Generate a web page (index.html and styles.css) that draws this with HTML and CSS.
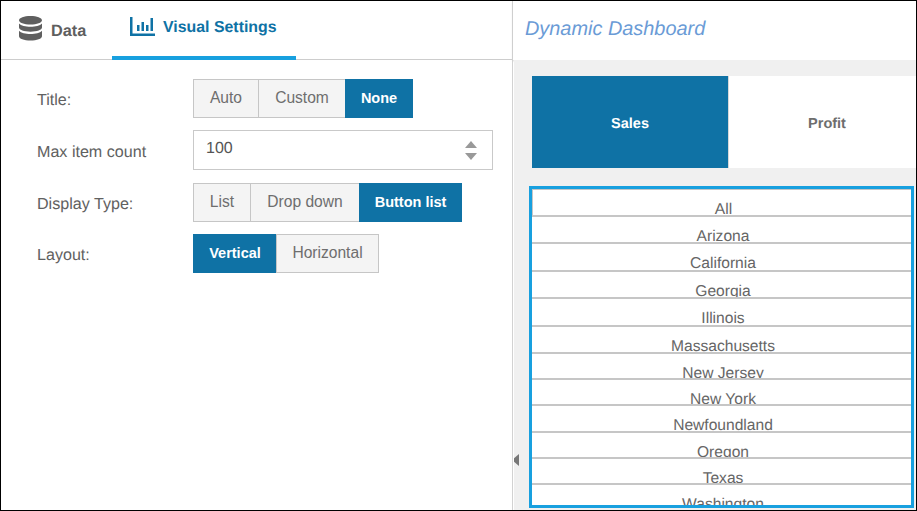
FILE: index.html
```html
<!DOCTYPE html>
<html lang="en">
<head>
<meta charset="utf-8">
<title>Dynamic Dashboard</title>
<link rel="stylesheet" href="styles.css">
</head>
<body>
<div class="frame">
  <section class="left">
    <nav class="tabs">
      <a class="tab tab-data">
        <svg class="icon-db" width="23" height="25" viewBox="0 0 23 25"><path fill="#5f5f5f" d="M11.500 0C5.100 0 0 1.900 0 4.300s5.100 4.300 11.500 4.300S23 6.700 23 4.300 17.900 0 11.500 0zM0 7.500v4c0 2.300 5.100 4.200 11.500 4.200S23 13.800 23 11.500v-4c-2 2.100-6.500 3.200-11.500 3.200S2 9.600 0 7.500zM0 14.800v5.400c0 2.400 5.100 4.300 11.500 4.300S23 22.600 23 20.200v-5.400c-2 2.100-6.500 3.200-11.500 3.200S2 16.900 0 14.800z"/></svg>
        <span>Data</span>
      </a>
      <a class="tab tab-visual">
        <svg class="icon-chart" width="25" height="19" viewBox="0 0 25 19"><path fill="#0f72a5" d="M0 0h2.500v16.500H25V19H0zM7 8h2.500v6H7zM11.500 5H14v9h-2.500zM16 8h2.500v6H16zM20.500 1H23v13h-2.500z"/></svg>
        <span>Visual Settings</span>
      </a>
    </nav>
    <div class="form">
      <div class="row row-title">
        <label class="label">Title:</label>
        <div class="group">
          <button class="btn b-auto">Auto</button><button class="btn b-custom">Custom</button><button class="btn on b-none">None</button>
        </div>
      </div>
      <div class="row row-count">
        <label class="label">Max item count</label>
        <div class="number">
          <span class="value">100</span>
          <span class="spin"><i class="up"></i><i class="down"></i></span>
        </div>
      </div>
      <div class="row row-display">
        <label class="label">Display Type:</label>
        <div class="group">
          <button class="btn b-list">List</button><button class="btn b-drop">Drop down</button><button class="btn on b-blist">Button list</button>
        </div>
      </div>
      <div class="row row-layout">
        <label class="label">Layout:</label>
        <div class="group">
          <button class="btn on b-vert">Vertical</button><button class="btn b-horiz">Horizontal</button>
        </div>
      </div>
    </div>
  </section>
  <section class="right">
    <header class="head"><h1>Dynamic Dashboard</h1></header>
    <div class="canvas">
      <i class="collapse"></i>
      <div class="measure">
        <div class="m on-m">Sales</div>
        <div class="m">Profit</div>
      </div>
      <div class="list">
        <div class="item">All</div>
        <div class="item">Arizona</div>
        <div class="item">California</div>
        <div class="item">Georgia</div>
        <div class="item">Illinois</div>
        <div class="item">Massachusetts</div>
        <div class="item">New Jersey</div>
        <div class="item">New York</div>
        <div class="item">Newfoundland</div>
        <div class="item">Oregon</div>
        <div class="item">Texas</div>
        <div class="item">Washington</div>
      </div>
    </div>
  </section>
</div>
</body>
</html>
```

FILE: styles.css
```css
* { box-sizing: border-box; }
html, body { margin: 0; padding: 0; background: #fff; }
body { font-family: "Liberation Sans", Arial, sans-serif; color: #616161; overflow: hidden; text-rendering: geometricPrecision; }
.frame { width: 917px; height: 511px; border: 1px solid #000; display: flex; overflow: hidden; background: #fff; }
.left { width: 512px; flex: none; border-right: 1px solid #d2d2d2; }
.tabs { height: 59px; border-bottom: 1px solid #cdcdcd; display: flex; padding-left: 18px; }
.tab { display: flex; font-weight: bold; }
.tab-data { width: 93px; font-size: 16.300px; color: #5f5f5f; align-items: flex-start; padding-top: 15px; }
.tab-data span { margin: 6px 0 0 9px; }
.tab-visual { width: 184px; height: 59px; font-size: 15.900px; color: #0f72a5; border-bottom: 4px solid #18a0df; padding: 16px 0 0 18px; align-items: flex-start; }
.tab-visual span { margin: 2px 0 0 8px; }
.form { padding: 19px 19px 0 36px; }
.row { display: flex; align-items: center; }
.row-title { height: 39px; }
.row-count { height: 40px; margin-top: 12px; }
.row-display { height: 39px; margin-top: 13px; }
.row-layout { height: 39px; margin-top: 12px; }
.label { width: 156px; font-size: 16.100px; flex: none; padding-top: 4px; }
.group { display: flex; }
.btn { height: 39px; font: 15.600px "Liberation Sans", Arial, sans-serif; color: #6e6e6e; background: #f4f4f4; border: 1px solid #c6c6c6; margin: 0 0 0 -1px; padding: 0 0 2px; }
.btn:first-child { margin-left: 0; }
.btn.on { background: #0f72a5; color: #fff; font-weight: bold; font-size: 14.500px; border-color: #0f72a5; }
.b-auto { width: 66px; }
.b-custom { width: 88px; }
.b-none { width: 68px; }
.b-list { width: 58px; }
.b-drop { width: 110px; }
.b-blist { width: 103px; }
.b-vert { width: 84px; }
.b-horiz { width: 103px; }
.number { width: 300px; height: 40px; border: 1px solid #c9c9c9; display: flex; justify-content: space-between; padding: 9px 15px 0 12px; font-size: 16px; color: #555; }
.spin { display: flex; flex-direction: column; gap: 5px; padding-top: 1px; }
.spin i { width: 0; height: 0; border-left: 6px solid transparent; border-right: 6px solid transparent; }
.spin .up { border-bottom: 7px solid #999; }
.spin .down { border-top: 7px solid #999; }
.right { flex: 1; min-width: 0; }
.head { height: 59px; padding-left: 12px; box-shadow: 0 1px 2px #c9c9c9; position: relative; }
.head h1 { margin: 0; font-size: 19.900px; line-height: 56px; font-weight: normal; font-style: italic; color: #6a9bd6; }
.canvas { height: 450px; background: #f0f0f0; position: relative; padding: 16px 0 0 18px; overflow: hidden; margin-left: 1px; }
.collapse { position: absolute; left: -2px; top: 394px; width: 0; height: 0; border-top: 6px solid transparent; border-bottom: 6px solid transparent; border-right: 7px solid #777; }
.measure { width: 384px; height: 92px; display: flex; background: #fff; }
.m { width: 197px; flex: none; display: flex; align-items: center; justify-content: center; padding-top: 4px; font-size: 14.500px; font-weight: bold; color: #6e6e6e; border-left: 1px solid #d8d8d8; margin-right: -1px; }
.m.on-m { background: #0f72a5; color: #fff; border-left: 0; width: 196px; margin-right: 0; }
.list { width: 385px; height: 322px; margin: 18px 0 0 -3px; border: 3px solid #18a0df; background: #fff; overflow: hidden; }
.item { height: 27.500px; padding: 11px 0 0 3px; text-align: center; font-size: 15.600px; line-height: 17px; overflow: hidden; border-bottom: 2px solid #c6c6c6; color: #666; }
.item:first-child { border-top: 1px solid #c6c6c6; border-left: 1px solid #c6c6c6; padding-top: 11px; }
.item:nth-child(n+7) { height: 26.200px; }
```
